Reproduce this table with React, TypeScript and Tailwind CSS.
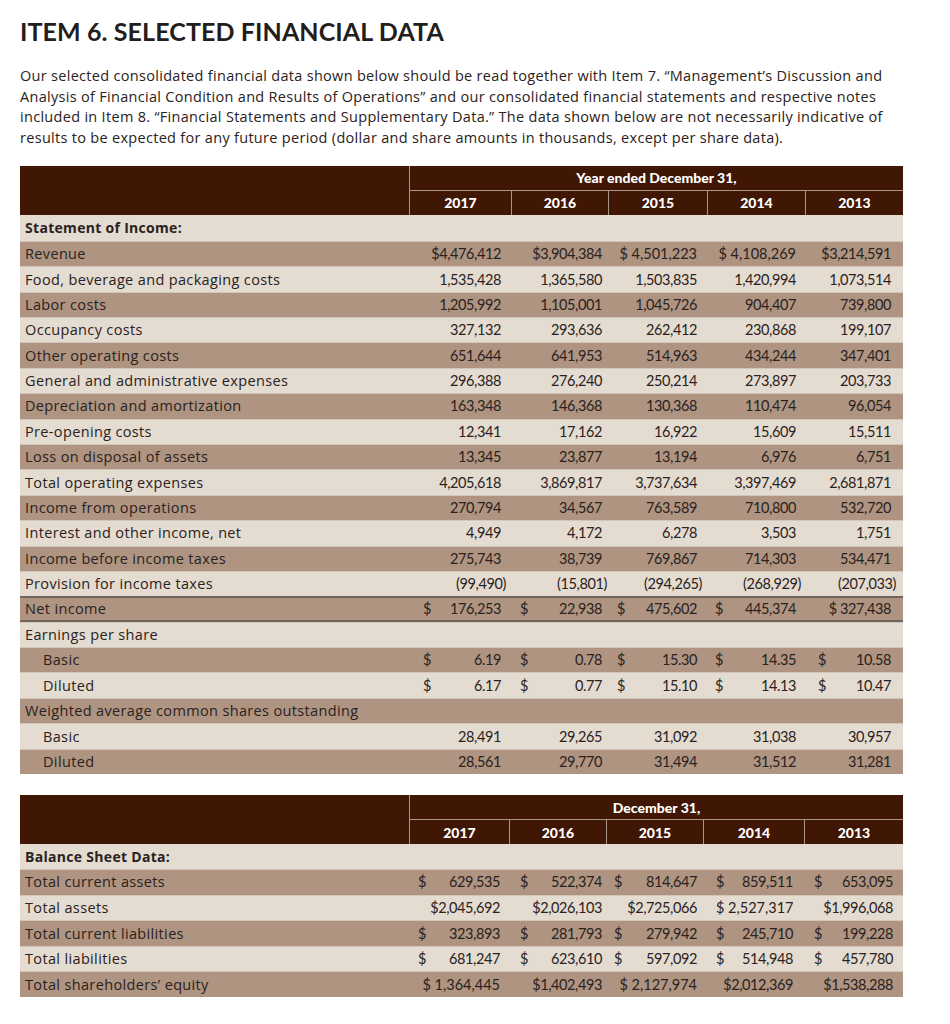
import React from "react";

type Cell = string | { d: true; v: string };

const DARK = "bg-[#ae9481]";
const LIGHT = "bg-[#e4dbd1]";

const pl1 = ["pl-[13px]", "pl-[8px]", "pl-[8px]", "pl-[7px]", "pl-[12px]"];
const pr1 = ["pr-[11px]", "pr-[7px]", "pr-[11px]", "pr-[10px]", "pr-[12px]"];
const pl2 = ["pl-[8px]", "pl-[10px]", "pl-[7px]", "pl-[12px]", "pl-[9px]"];
const pr2 = ["pr-[10px]", "pr-[5px]", "pr-[7px]", "pr-[12px]", "pr-[10px]"];

const d = (v: string): Cell => ({ d: true, v });

type Row = {
  label: string;
  cells?: Cell[];
  indent?: boolean;
  net?: boolean;
};

const incomeRows: Row[] = [
  { label: "Revenue", cells: ["$4,476,412", "$3,904,384", "$\u202F4,501,223", "$\u202F4,108,269", "$3,214,591"] },
  { label: "Food, beverage and packaging costs", cells: ["1,535,428", "1,365,580", "1,503,835", "1,420,994", "1,073,514"] },
  { label: "Labor costs", cells: ["1,205,992", "1,105,001", "1,045,726", "904,407", "739,800"] },
  { label: "Occupancy costs", cells: ["327,132", "293,636", "262,412", "230,868", "199,107"] },
  { label: "Other operating costs", cells: ["651,644", "641,953", "514,963", "434,244", "347,401"] },
  { label: "General and administrative expenses", cells: ["296,388", "276,240", "250,214", "273,897", "203,733"] },
  { label: "Depreciation and amortization", cells: ["163,348", "146,368", "130,368", "110,474", "96,054"] },
  { label: "Pre-opening costs", cells: ["12,341", "17,162", "16,922", "15,609", "15,511"] },
  { label: "Loss on disposal of assets", cells: ["13,345", "23,877", "13,194", "6,976", "6,751"] },
  { label: "Total operating expenses", cells: ["4,205,618", "3,869,817", "3,737,634", "3,397,469", "2,681,871"] },
  { label: "Income from operations", cells: ["270,794", "34,567", "763,589", "710,800", "532,720"] },
  { label: "Interest and other income, net", cells: ["4,949", "4,172", "6,278", "3,503", "1,751"] },
  { label: "Income before income taxes", cells: ["275,743", "38,739", "769,867", "714,303", "534,471"] },
  { label: "Provision for income taxes", cells: ["(99,490)", "(15,801)", "(294,265)", "(268,929)", "(207,033)"] },
  { label: "Net income", net: true, cells: [d("176,253"), d("22,938"), d("475,602"), d("445,374"), "$ 327,438"] },
  { label: "Earnings per share" },
  { label: "Basic", indent: true, cells: [d("6.19"), d("0.78"), d("15.30"), d("14.35"), d("10.58")] },
  { label: "Diluted", indent: true, cells: [d("6.17"), d("0.77"), d("15.10"), d("14.13"), d("10.47")] },
  { label: "Weighted average common shares outstanding" },
  { label: "Basic", indent: true, cells: ["28,491", "29,265", "31,092", "31,038", "30,957"] },
  { label: "Diluted", indent: true, cells: ["28,561", "29,770", "31,494", "31,512", "31,281"] },
];

const balanceRows: Row[] = [
  { label: "Total current assets", cells: [d("629,535"), d("522,374"), d("814,647"), d("859,511"), d("653,095")] },
  { label: "Total assets", cells: ["$2,045,692", "$2,026,103", "$2,725,066", "$\u202F2,527,317", "$1,996,068"] },
  { label: "Total current liabilities", cells: [d("323,893"), d("281,793"), d("279,942"), d("245,710"), d("199,228")] },
  { label: "Total liabilities", cells: [d("681,247"), d("623,610"), d("597,092"), d("514,948"), d("457,780")] },
  { label: "Total shareholders\u2019 equity", cells: ["$\u202F1,364,445", "$1,402,493", "$\u202F2,127,974", "$2,012,369", "$1,538,288"] },
];

const years = ["2017", "2016", "2015", "2014", "2013"];

function Header({ title, cols }: { title: string; cols: string }) {
  return (
    <div className={`grid ${cols} bg-[#401604] text-white font-['Lato',sans-serif] font-black text-[14px]`}>
      <div className="row-span-2 border-r border-[#a8978a]" />
      <div className="col-span-5 h-[25px] flex items-center justify-center border-b border-[#a8978a]">
        {title}
      </div>
      {years.map((y, i) => (
        <div
          key={y}
          className={`h-[24px] flex items-center justify-center ${i < 4 ? "border-r border-[#a8978a]" : ""}`}
        >
          {y}
        </div>
      ))}
    </div>
  );
}

function DataRow({ row, idx, cols, pl, pr, h }: { row: Row; idx: number; cols: string; pl: string[]; pr: string[]; h: string }) {
  const bg = idx % 2 === 0 ? DARK : LIGHT;
  const border = row.net ? "border-y-2 border-[#6e655e]" : "border-t border-[#d2c6ba]";
  return (
    <div className={`grid ${cols} ${h} ${bg} ${border} items-center`}>
      <div className={`${row.indent ? "pl-[23px]" : "pl-[5px]"} whitespace-nowrap font-['Open_Sans',sans-serif] text-[14.5px] tracking-[0.35px]`}>
        {row.label}
      </div>
      {(row.cells || ["", "", "", "", ""]).map((c, i) => (
        <div
          key={i}
          className={`${pl[i]} ${pr[i]} flex justify-between whitespace-nowrap font-['Lato',sans-serif] text-[14.5px] tracking-[-0.4px]`}
        >
          {typeof c === "string" ? (
            <span className={`ml-auto ${c.startsWith("(") ? "mr-[-5px]" : ""}`}>{c}</span>
          ) : (
            <>
              <span>$</span>
              <span>{c.v}</span>
            </>
          )}
        </div>
      ))}
    </div>
  );
}

export default function App() {
  const cols1 = "grid-cols-[390px_102px_97px_99px_98px_97px]";
  const cols2 = "grid-cols-[390px_100px_97px_97px_101px_98px]";
  return (
    <div className="w-[950px] min-h-[1024px] bg-white text-[#2a2220] font-['Open_Sans',sans-serif] pl-[20px]">
      <h1 className="pt-[14px] text-[25px] leading-[34px] font-bold tracking-[0.1px] text-[#231d1b] font-['Lato',sans-serif]">
        ITEM 6. SELECTED FINANCIAL DATA
      </h1>
      <p className="mt-[18px] text-[14.5px] leading-[20.7px] tracking-[0.3px] text-[#2a2220] whitespace-nowrap">
        Our selected consolidated financial data shown below should be read together with Item 7. {"\u201C"}Management{"\u2019"}s Discussion and
        <br />
        Analysis of Financial Condition and Results of Operations{"\u201D"} and our consolidated financial statements and respective notes
        <br />
        included in Item 8. {"\u201C"}Financial Statements and Supplementary Data.{"\u201D"} The data shown below are not necessarily indicative of
        <br />
        results to be expected for any future period (dollar and share amounts in thousands, except per share data).
      </p>

      <div className="mt-[17px] w-[883px]">
        <Header title="Year ended December 31," cols={cols1} />
        <div className={`h-[26px] ${LIGHT} flex items-center pl-[5px] font-bold text-[14px] tracking-[0.3px]`}>Statement of Income:</div>
        {incomeRows.map((r, i) => (
          <DataRow key={i} row={r} idx={i} cols={cols1} pl={pl1} pr={pr1} h="h-[25.4px]" />
        ))}
      </div>

      <div className="mt-[21px] w-[883px]">
        <Header title="December 31," cols={cols2} />
        <div className={`h-[25px] ${LIGHT} flex items-center pl-[5px] font-bold text-[14px] tracking-[0.3px]`}>Balance Sheet Data:</div>
        {balanceRows.map((r, i) => (
          <DataRow key={i} row={r} idx={i} cols={cols2} pl={pl2} pr={pr2} h="h-[25.6px]" />
        ))}
      </div>
    </div>
  );
}
